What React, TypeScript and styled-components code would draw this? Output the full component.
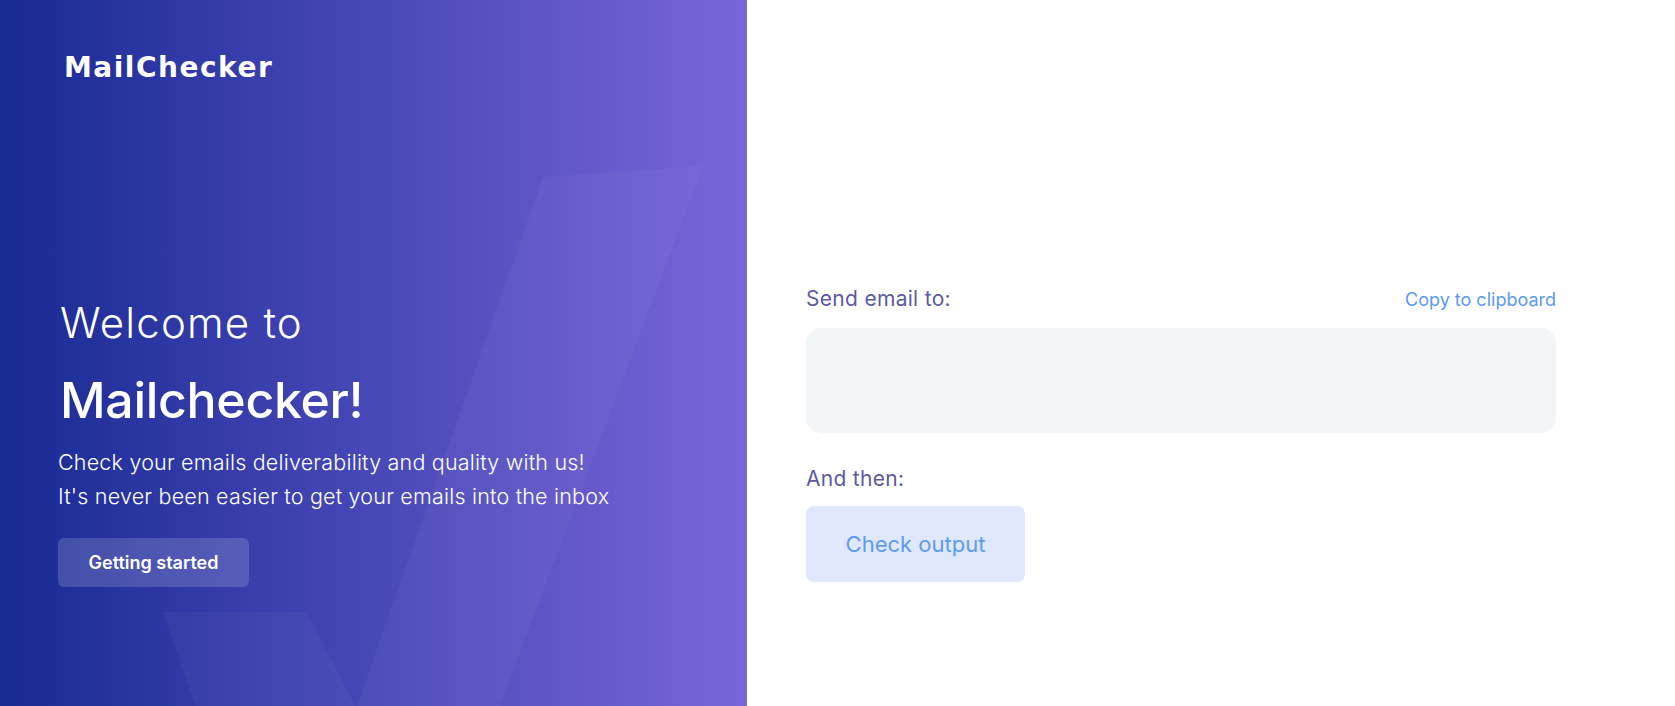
import React from 'react';
import styled, { createGlobalStyle } from 'styled-components';

const GlobalStyle = createGlobalStyle`
  * { box-sizing: border-box; }
  html, body, #root { margin: 0; padding: 0; height: 100%; }
  body {
    font-family: Inter, "Noto Sans", Arial, sans-serif;
    background: #ffffff;
  }
`;

const Page = styled.div`
  display: flex;
  width: 100%;
  height: 100vh;
  min-height: 706px;
`;

const Hero = styled.section`
  position: relative;
  flex: 0 0 747px;
  display: flex;
  flex-direction: column;
  padding: 50px 0 0 60px;
  overflow: hidden;
  color: #ffffff;
  background: linear-gradient(90deg, #182a94 0%, #4848b7 50%, #7866da 100%);
`;

const Backdrop = styled.svg`
  position: absolute;
  inset: 0;
  width: 100%;
  height: 100%;
  pointer-events: none;
`;

const Logo = styled.div`
  position: relative;
  margin-left: 4px;
  font-family: "DejaVu Sans", Verdana, sans-serif;
  font-size: 28px;
  font-weight: 700;
  letter-spacing: 1.5px;
  line-height: 36px;
`;

const HeroText = styled.div`
  position: relative;
  margin-top: 212px;
  display: flex;
  flex-direction: column;
  align-items: flex-start;
`;

const Greeting = styled.h1`
  margin: 0;
  font-size: 42px;
  font-weight: 300;
  line-height: 50px;
  letter-spacing: 1.2px;
`;

const Brand = styled.h2`
  margin: 22px 0 0;
  font-size: 50px;
  font-weight: 500;
  line-height: 60px;
  letter-spacing: -0.3px;
`;

const Tagline = styled.p`
  margin: 15px 0 0 -2px;
  font-size: 21.5px;
  font-weight: 300;
  line-height: 34px;
  letter-spacing: 0.2px;
`;

const StartButton = styled.button`
  margin: 25px 0 0 -2px;
  width: 191px;
  height: 49px;
  border: none;
  border-radius: 6px;
  background: rgba(255, 255, 255, 0.16);
  color: #ffffff;
  font-family: inherit;
  font-size: 18px;
  font-weight: 600;
  cursor: pointer;
`;

const Workspace = styled.section`
  flex: 1;
  padding: 285px 0 0 59px;
`;

const Form = styled.div`
  width: 750px;
  display: flex;
  flex-direction: column;
`;

const LabelRow = styled.div`
  display: flex;
  justify-content: space-between;
  align-items: baseline;
`;

const Label = styled.span`
  font-size: 21px;
  color: #5e5a9f;
  line-height: 28px;
  letter-spacing: 0.3px;
`;

const CopyLink = styled.a`
  font-size: 18px;
  color: #5b9bf0;
  cursor: pointer;
`;

const AddressBox = styled.div`
  margin-top: 15px;
  height: 105px;
  border-radius: 15px;
  background: #f3f6f9;
`;

const StepLabel = styled(Label)`
  margin-top: 32px;
`;

const CheckButton = styled.button`
  margin-top: 13px;
  width: 219px;
  height: 76px;
  border: none;
  border-radius: 8px;
  background: #e0e8fd;
  color: #5b9bf0;
  font-family: inherit;
  font-size: 22px;
  cursor: pointer;
`;

export default function App() {
  return (
    <>
      <GlobalStyle />
      <Page>
        <Hero>
          <Backdrop viewBox="0 0 747 706" preserveAspectRatio="none">
            <polygon points="543,177 703,166 500,706 357,706" fill="rgba(255,255,255,0.035)" />
            <polygon points="163,612 307,612 355,706 195,706" fill="rgba(255,255,255,0.035)" />
          </Backdrop>
          <Logo>MailChecker</Logo>
          <HeroText>
            <Greeting>Welcome to</Greeting>
            <Brand>Mailchecker!</Brand>
            <Tagline>
              Check your emails deliverability and quality with us!
              <br />
              It's never been easier to get your emails into the inbox
            </Tagline>
            <StartButton>Getting started</StartButton>
          </HeroText>
        </Hero>
        <Workspace>
          <Form>
            <LabelRow>
              <Label>Send email to:</Label>
              <CopyLink>Copy to clipboard</CopyLink>
            </LabelRow>
            <AddressBox />
            <StepLabel>And then:</StepLabel>
            <CheckButton>Check output</CheckButton>
          </Form>
        </Workspace>
      </Page>
    </>
  );
}
